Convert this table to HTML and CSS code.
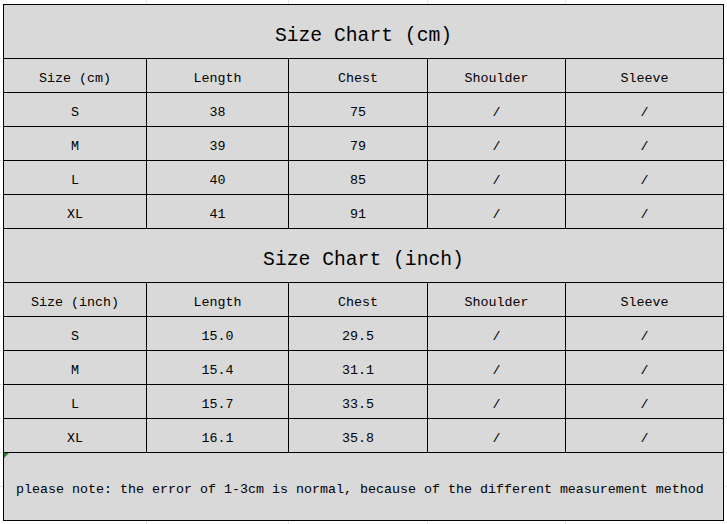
FILE: index.html
```html
<!DOCTYPE html>
<html>
<head>
<meta charset="utf-8">
<link rel="stylesheet" href="styles.css">
</head>
<body>
<div class="sheet">
  <div class="chart">
    <div class="cell title">Size Chart (cm)</div>
    <div class="cell">Size (cm)</div><div class="cell">Length</div><div class="cell">Chest</div><div class="cell">Shoulder</div><div class="cell">Sleeve</div>
    <div class="cell">S</div><div class="cell">38</div><div class="cell">75</div><div class="cell">/</div><div class="cell">/</div>
    <div class="cell">M</div><div class="cell">39</div><div class="cell">79</div><div class="cell">/</div><div class="cell">/</div>
    <div class="cell">L</div><div class="cell">40</div><div class="cell">85</div><div class="cell">/</div><div class="cell">/</div>
    <div class="cell">XL</div><div class="cell">41</div><div class="cell">91</div><div class="cell">/</div><div class="cell">/</div>
    <div class="cell title">Size Chart (inch)</div>
    <div class="cell">Size (inch)</div><div class="cell">Length</div><div class="cell">Chest</div><div class="cell">Shoulder</div><div class="cell">Sleeve</div>
    <div class="cell">S</div><div class="cell">15.0</div><div class="cell">29.5</div><div class="cell">/</div><div class="cell">/</div>
    <div class="cell">M</div><div class="cell">15.4</div><div class="cell">31.1</div><div class="cell">/</div><div class="cell">/</div>
    <div class="cell">L</div><div class="cell">15.7</div><div class="cell">33.5</div><div class="cell">/</div><div class="cell">/</div>
    <div class="cell">XL</div><div class="cell">16.1</div><div class="cell">35.8</div><div class="cell">/</div><div class="cell">/</div>
    <div class="cell note"><span class="flag"></span>please note: the error of 1-3cm is normal, because of the different measurement method</div>
  </div>
</div>
</body>
</html>
```

FILE: styles.css
```css
html, body {
  margin: 0;
  padding: 0;
}
body {
  --grid: linear-gradient(#e4e4e4, #e4e4e4);
  width: 727px;
  height: 524px;
  overflow: hidden;
  background-color: #ffffff;
  background-image:
    var(--grid), var(--grid), var(--grid), var(--grid),
    var(--grid), var(--grid), var(--grid), var(--grid),
    var(--grid), var(--grid), var(--grid), var(--grid),
    var(--grid), var(--grid), var(--grid), var(--grid), var(--grid);
  background-size:
    1px 524px, 1px 524px, 1px 524px, 1px 524px,
    727px 1px, 727px 1px, 727px 1px, 727px 1px,
    727px 1px, 727px 1px, 727px 1px, 727px 1px,
    727px 1px, 727px 1px, 727px 1px, 727px 1px, 727px 1px;
  background-repeat: no-repeat;
  background-position:
    146px 0, 288px 0, 427px 0, 565px 0,
    0 58px, 0 92px, 0 126px, 0 160px,
    0 194px, 0 228px, 0 282px, 0 316px,
    0 350px, 0 384px, 0 418px, 0 452px, 0 486px;
  font-family: "Liberation Mono", "DejaVu Sans Mono", monospace;
  color: #000;
}
.sheet {
  padding: 4px 0 0 3px;
}
.chart {
  display: grid;
  grid-template-columns: 142px 141px 138px 137px 157px;
  grid-template-rows: 53px repeat(5, 33px) 53px repeat(5, 33px) 67px;
  gap: 1px;
  padding: 1px;
  width: max-content;
  background: #000;
}
.cell {
  position: relative;
  background: #d9d9d9;
  display: flex;
  align-items: center;
  justify-content: center;
  padding-top: 5px;
  box-sizing: border-box;
  font-size: 13.33px;
  white-space: nowrap;
}
.title {
  grid-column: 1 / -1;
  font-size: 19.7px;
  padding-top: 8px;
}
.note {
  grid-column: 1 / -1;
  justify-content: flex-start;
  padding-left: 12px;
  padding-top: 5px;
}
.flag {
  position: absolute;
  left: 0;
  top: 0;
  width: 0;
  height: 0;
  border-top: 5px solid #2e7d32;
  border-right: 5px solid transparent;
}
```
